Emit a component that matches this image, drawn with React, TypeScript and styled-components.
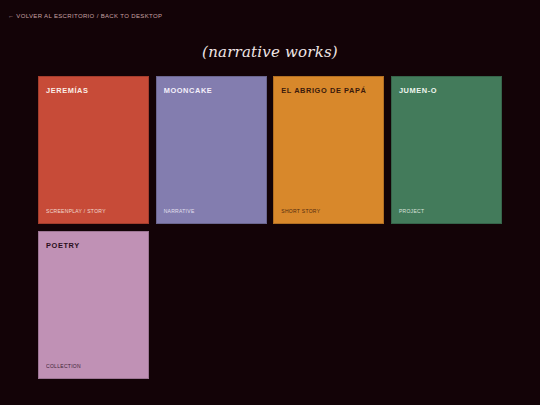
import styled, { createGlobalStyle } from "styled-components";

type Work = {
  title: string;
  kind: string;
  bg: string;
  ink: string;
};

const works: Work[] = [
  { title: "Jeremías", kind: "Screenplay / Story", bg: "#c74b38", ink: "#fbeee6" },
  { title: "Mooncake", kind: "Narrative", bg: "#837daf", ink: "#f4f0fb" },
  { title: "El abrigo de papá", kind: "Short story", bg: "#d8882b", ink: "#3a1a0c" },
  { title: "Jumen-o", kind: "Project", bg: "#437b5b", ink: "#eef5ee" },
  { title: "Poetry", kind: "Collection", bg: "#c091b5", ink: "#2a0f1c" },
];

function App() {
  return (
    <>
      <GlobalStyle />
      <Page>
        <BackLink href="#">← Volver al escritorio / Back to desktop</BackLink>
        <Heading>(narrative works)</Heading>
        <Grid>
          {works.map((w) => (
            <Card key={w.title} $bg={w.bg} $ink={w.ink}>
              <CardTitle>{w.title}</CardTitle>
              <CardKind>{w.kind}</CardKind>
            </Card>
          ))}
        </Grid>
      </Page>
    </>
  );
}

const GlobalStyle = createGlobalStyle`
  html, body {
    margin: 0;
    padding: 0;
    background: #130307;
  }
  body {
    font-family: "Liberation Sans", Arial, sans-serif;
  }
`;

const Page = styled.div`
  min-height: 405px;
  padding: 12px 38px 20px;
  box-sizing: border-box;
  display: flex;
  flex-direction: column;
`;

const BackLink = styled.a`
  margin-left: -30px;
  font-size: 6px;
  letter-spacing: 0.35px;
  text-transform: uppercase;
  color: #c7a0a3;
  text-decoration: none;
  line-height: 8px;
`;

const Heading = styled.h1`
  margin: 22px 0 14px;
  text-align: center;
  font-family: "DejaVu Serif", "Liberation Serif", serif;
  font-style: italic;
  font-weight: normal;
  font-size: 15px;
  letter-spacing: 0.2px;
  line-height: 20px;
  color: #f0e6e6;
`;

const Grid = styled.div`
  display: grid;
  grid-template-columns: repeat(4, 1fr);
  gap: 6.5px;
`;

const Card = styled.div<{ $bg: string; $ink: string }>`
  aspect-ratio: 3 / 4;
  background: ${(p) => p.$bg};
  color: ${(p) => p.$ink};
  border: 1px solid rgba(0, 0, 0, 0.18);
  box-sizing: border-box;
  padding: 10px 7px 9px;
  display: flex;
  flex-direction: column;
  justify-content: space-between;
  text-transform: uppercase;
`;

const CardTitle = styled.div`
  font-weight: bold;
  font-size: 7.4px;
  letter-spacing: 0.6px;
  line-height: 8px;
`;

const CardKind = styled.div`
  font-size: 5px;
  letter-spacing: 0.3px;
  line-height: 6px;
  opacity: 0.85;
`;

export default App;
